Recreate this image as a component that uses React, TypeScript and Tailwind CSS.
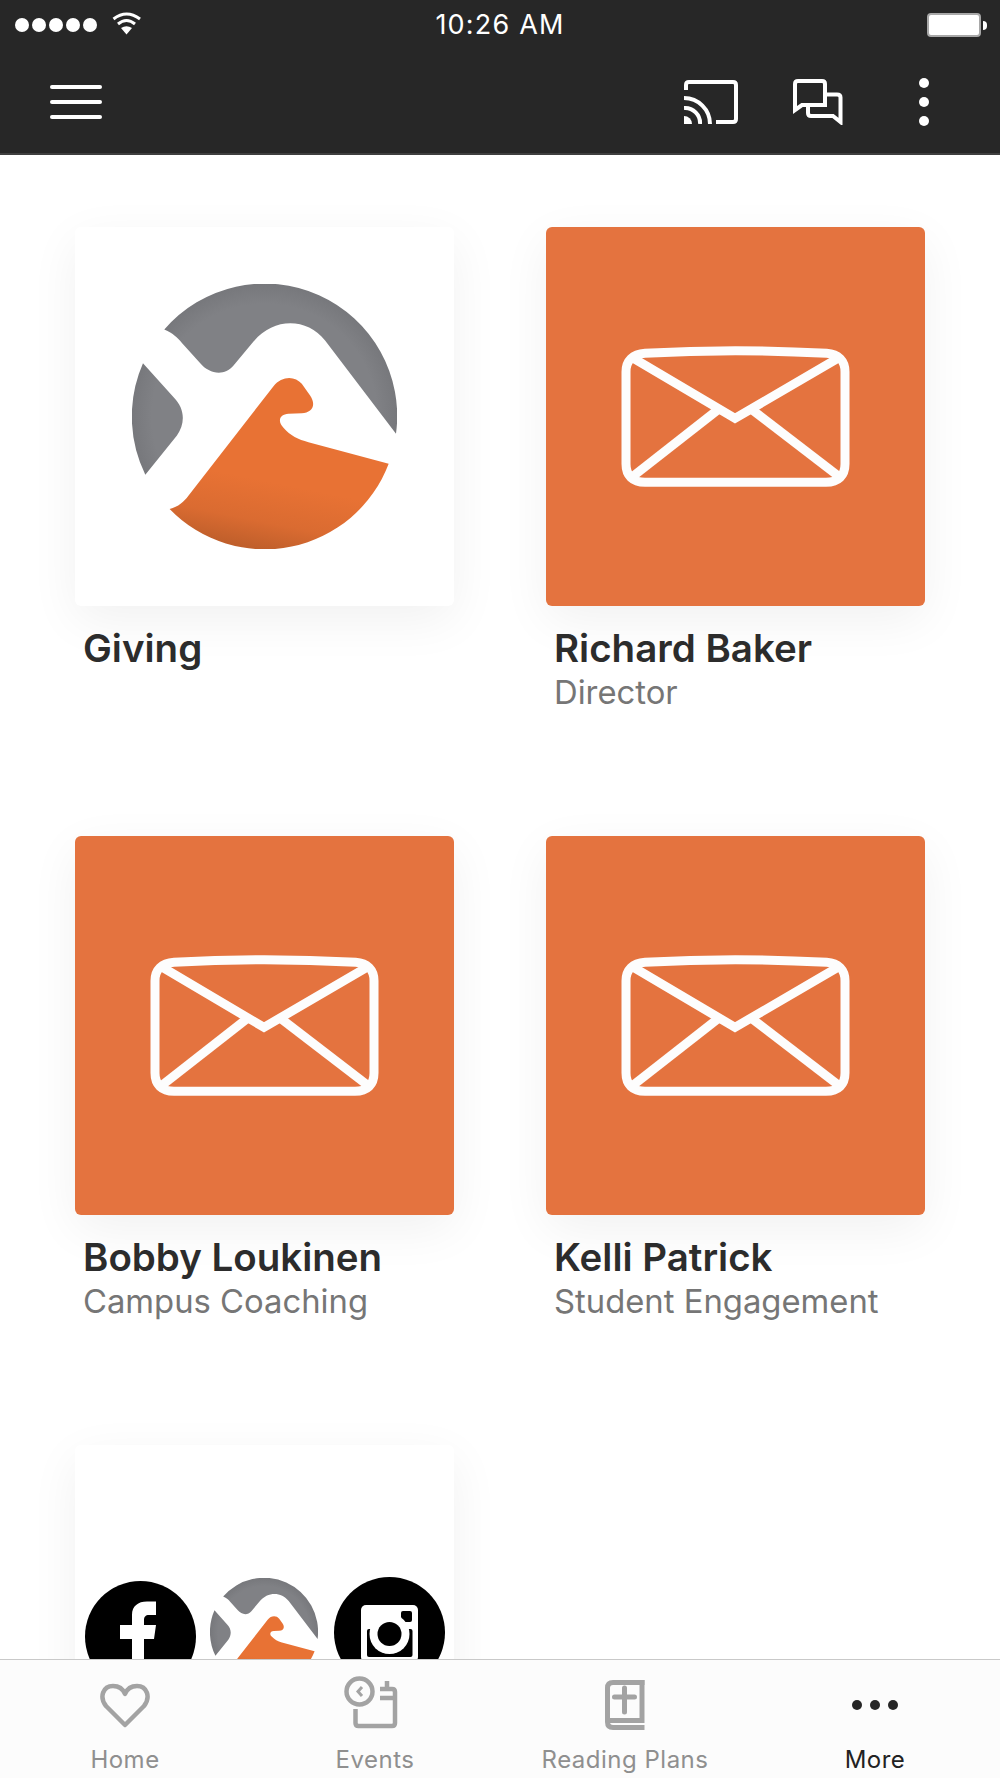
import React, { useId } from "react";

function Logo({ size }: { size: number }) {
  const id = useId().replace(/:/g, "");
  return (
    <svg width={size} height={size} viewBox="215 190 796 796" className="shrink-0">
      <defs>
        <radialGradient id={`g${id}`} gradientUnits="userSpaceOnUse" cx="613" cy="588" r="398">
          <stop offset="0.85" stopColor="#808185" />
          <stop offset="1" stopColor="#77787c" />
        </radialGradient>
        <linearGradient id={`o${id}`} gradientUnits="userSpaceOnUse" x1="660" y1="790" x2="620" y2="990">
          <stop offset="0" stopColor="#e87234" />
          <stop offset="0.6" stopColor="#da6b31" />
          <stop offset="1" stopColor="#c05f2b" />
        </linearGradient>
      </defs>
      <path
        fill={`url(#g${id})`}
        d="M312 327 C340 340 350 350 365 367 L420 428 C445 458 490 470 520 435 L580 363 C640 290 740 290 795 360 L1008 640 A398 398 0 0 0 312 327 Z"
      />
      <path
        fill={`url(#g${id})`}
        d="M248 428 L340 530 C375 565 375 610 350 645 L255 763 A398 398 0 0 1 248 428 Z"
      />
      <path
        fill={`url(#o${id})`}
        d="M328 866 C355 858 370 845 385 825 L640 497 C665 465 705 465 725 490 L750 525 C770 555 755 577 725 578 L685 580 C660 582 650 600 670 622 C690 645 715 658 745 665 L986 730 A398 398 0 0 1 328 866 Z"
      />
    </svg>
  );
}

function Envelope() {
  return (
    <svg width="290" height="180" viewBox="0 0 870 540" fill="none" stroke="#fdfdfd" strokeWidth="27" className="mb-[14px] mr-[2px]">
      <path d="M165 100 Q435 84 710 100 C745 102 765 122 765 155 V432 C765 467 745 487 708 487 H165 C128 487 108 467 108 432 V155 C108 122 128 102 165 100 Z" />
      <path d="M132 116 L435 295 L742 116" />
      <path d="M130 468 L388 266" />
      <path d="M482 266 L745 468" />
    </svg>
  );
}

function Person({ name, role }: { name: string; role: string }) {
  return (
    <div>
      <div className="w-[379px] h-[379px] rounded-[6px] bg-[#e4733f] flex items-center justify-center shadow-[0_14px_50px_rgba(0,0,0,0.06)]">
        <Envelope />
      </div>
      <Label name={name} role={role} />
    </div>
  );
}

function Label({ name, role }: { name: string; role?: string }) {
  return (
    <div className="pl-[8px] pt-[20px] h-[140px]">
      <div className="text-[38.5px] leading-[44px] font-semibold text-[#2c2c2c]">{name}</div>
      {role && <div className="text-[32.8px] leading-[44px] text-[#767676]">{role}</div>}
    </div>
  );
}

function Tab({ label, active, children }: { label: string; active?: boolean; children: React.ReactNode }) {
  return (
    <div className="flex flex-col items-center pt-[15px]">
      <div className="h-[60px] flex items-center justify-center">{children}</div>
      <div className={`mt-[10px] text-[24px] leading-[30px] tracking-[0.5px] ${active ? "text-[#222222]" : "text-[#8f8f8f]"}`}>
        {label}
      </div>
    </div>
  );
}

export default function App() {
  return (
    <div className="w-full h-[1778px] flex flex-col overflow-hidden bg-white [font-family:Inter,sans-serif]">
      <header className="h-[155px] shrink-0 bg-[#272727] border-b-2 border-[#3f3f3f] text-white">
        <div className="relative h-[50px] flex items-center">
          <div className="flex items-center gap-[3px] ml-[15px]">
            {[0, 1, 2, 3, 4].map((i) => (
              <span key={i} className="w-[14px] h-[14px] rounded-full bg-white" />
            ))}
          </div>
          <svg width="30" height="24" viewBox="0 0 30 24" fill="none" className="ml-[15px] -mt-[2px]">
            <path d="M1.5 7 Q14.5 -3 28 7" stroke="#fff" strokeWidth="3" />
            <path d="M6 12 Q14.5 5 23 12" stroke="#fff" strokeWidth="3" />
            <path d="M9 16 Q14.5 12.5 20 16 L14.5 22.5 Z" fill="#fff" />
          </svg>
          <div className="absolute left-0 right-0 top-0 text-center text-[27px] leading-[50px] tracking-[1.2px] font-normal">10:26 AM</div>
          <div className="ml-auto mr-[13px] flex items-center">
            <div className="w-[54px] h-[24px] rounded-[4px] bg-white border-2 border-[#a8a8a8]" />
            <div className="ml-[2px] w-[4px] h-[9px] rounded-r-full bg-white" />
          </div>
        </div>
        <div className="h-[103px] flex items-center">
          <div className="ml-[50px] w-[52px] flex flex-col gap-[11px]">
            <span className="h-[4px] rounded bg-white" />
            <span className="h-[4px] rounded bg-white" />
            <span className="h-[4px] rounded bg-white" />
          </div>
          <svg width="54" height="44" viewBox="0 0 54 44" fill="none" className="ml-auto" stroke="#fff" strokeWidth="4">
            <path d="M2 10 V5 Q2 2 5 2 H49 Q52 2 52 5 V39 Q52 42 49 42 H32" />
            <path d="M0 28 A15 15 0 0 1 16 44" />
            <path d="M0 18 A26 26 0 0 1 26 44" />
            <path d="M0 36 A8 8 0 0 1 8 44 H0 Z" fill="#fff" stroke="none" />
          </svg>
          <svg width="50" height="46" viewBox="0 0 50 46" fill="none" className="ml-[55px]" stroke="#fff" strokeWidth="4">
            <path d="M2 30 V5 Q2 2 5 2 H29 Q32 2 32 5 V26 H9 L2 31 Z" />
            <path d="M33 15.5 H44 Q47.5 15.5 47.5 18.5 V43 L40 37 H18 Q15 37 15 34 V27" />
          </svg>
          <div className="ml-[76px] mr-[71px] flex flex-col gap-[9px]">
            <span className="w-[10px] h-[10px] rounded-full bg-white" />
            <span className="w-[10px] h-[10px] rounded-full bg-white" />
            <span className="w-[10px] h-[10px] rounded-full bg-white" />
          </div>
        </div>
      </header>

      <main className="flex-1 min-h-0 overflow-hidden pt-[72px] pl-[75px]">
        <div className="grid grid-cols-[379px_379px] gap-x-[92px] gap-y-[90px]">
          <div>
            <div className="w-[379px] h-[379px] rounded-[6px] bg-white flex items-center justify-center shadow-[0_14px_50px_rgba(0,0,0,0.06)]">
              <Logo size={265} />
            </div>
            <Label name="Giving" />
          </div>
          <Person name="Richard Baker" role="Director" />
          <Person name="Bobby Loukinen" role="Campus Coaching" />
          <Person name="Kelli Patrick" role="Student Engagement" />
          <div className="w-[379px] h-[379px] rounded-[6px] bg-white flex items-center pl-[10px] shadow-[0_14px_50px_rgba(0,0,0,0.06)]">
            <svg width="111" height="111" viewBox="0 0 111 111" className="shrink-0 mt-[3px]">
              <circle cx="55.5" cy="55.5" r="55.5" fill="#000" />
              <path
                fill="#fff"
                d="M47 111 V58 H35 V44 H47 V34 C47 25 53 20.5 62 20.5 H71 V34 H64 C60.5 34 59 36 59 39 V44 H71 L69 58 H59 V111 Z"
              />
            </svg>
            <div className="ml-[14px] mb-[5px] flex">
              <Logo size={108} />
            </div>
            <svg width="111" height="111" viewBox="0 0 111 111" className="shrink-0 ml-[16px] mb-[5px]">
              <circle cx="55.5" cy="55.5" r="55.5" fill="#000" />
              <rect x="27" y="28" width="57" height="57" rx="5" fill="#fff" />
              <rect x="67" y="34" width="11" height="11" rx="2" fill="#000" />
              <rect x="33" y="52" width="45.5" height="28" rx="2" fill="#000" />
              <circle cx="55.5" cy="57" r="20" fill="#fff" />
              <circle cx="55.5" cy="57" r="12" fill="#000" />
            </svg>
          </div>
        </div>
      </main>

      <nav className="relative z-10 h-[119px] shrink-0 bg-[#fcfcfc] border-t border-[#c9c9c9] grid grid-cols-4">
        <Tab label="Home">
          <svg width="50" height="45" viewBox="0 0 50 45" fill="none" stroke="#a3a3a3" strokeWidth="4.5" strokeLinejoin="round">
            <path d="M25 42 L6 23 C-1 14 3 3 13 3 C19 3 23 6 25 11 C27 6 31 3 37 3 C47 3 51 14 44 23 Z" />
          </svg>
        </Tab>
        <Tab label="Events">
          <svg width="54" height="54" viewBox="0 0 54 54" fill="none" stroke="#a3a3a3" strokeWidth="4.5" className="mr-[8px] mb-[5px]">
            <circle cx="15.5" cy="15.5" r="13" />
            <path d="M18 11 L14 15.5 L18 20" strokeWidth="3" />
            <path d="M11.5 33 V47 Q11.5 50 14.5 50 H48 Q51 50 51 47 V16 Q51 13 48 13 H36" />
            <path d="M43 5 V13" />
            <path d="M36 22 H51" />
          </svg>
        </Tab>
        <Tab label="Reading Plans">
          <svg width="40" height="50" viewBox="0 0 40 50" fill="none" stroke="#a3a3a3" strokeWidth="5">
            <path d="M39.5 2.5 H8 Q2.5 2.5 2.5 8 V42 Q2.5 47.5 8 47.5 H39.5" />
            <path d="M37 0 V40.5 H4" />
            <path d="M9.5 17 H29.5 M19.5 8 V32" strokeLinecap="round" />
          </svg>
        </Tab>
        <Tab label="More" active>
          <div className="flex gap-[8px]">
            <span className="w-[10px] h-[10px] rounded-full bg-[#262626]" />
            <span className="w-[10px] h-[10px] rounded-full bg-[#262626]" />
            <span className="w-[10px] h-[10px] rounded-full bg-[#262626]" />
          </div>
        </Tab>
      </nav>
    </div>
  );
}
